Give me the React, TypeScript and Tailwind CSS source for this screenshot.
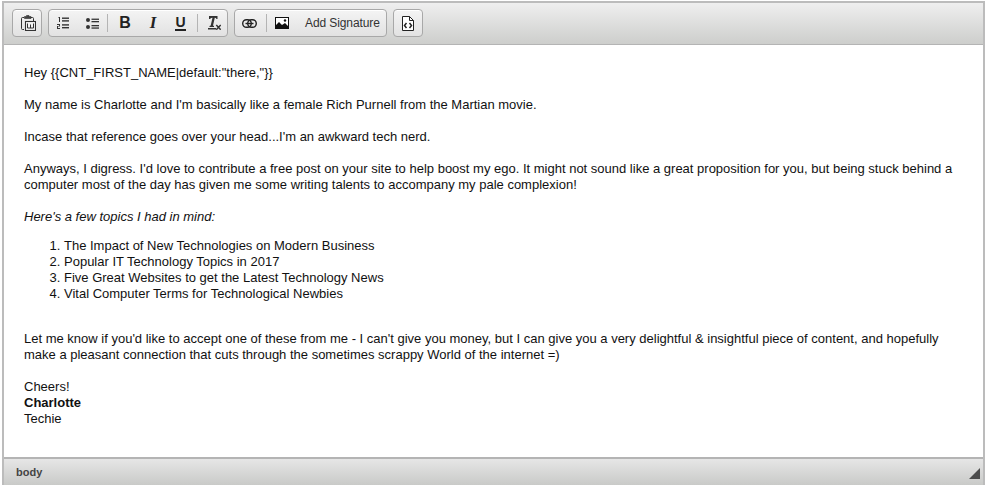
const Sep = () => <span className="w-px h-[18px] bg-[#b4b4b4]" />;

const Group = ({ children, className }: { children: React.ReactNode; className: string }) => (
  <div className={"h-[28px] flex items-center rounded-[4px] border border-[#a8a8a8] bg-gradient-to-b from-[#f4f4f4] to-[#e2e2e2] shadow-[inset_0_1px_0_#fff] " + className}>
    {children}
  </div>
);

const Slot = ({ children, className }: { children: React.ReactNode; className: string }) => (
  <span className={"flex items-center justify-center h-full text-[#222] " + className}>{children}</span>
);

function Toolbar() {
  return (
    <div className="h-[42px] flex items-start gap-[6px] pl-[8px] pt-[6px] border-b border-[#b4b4b4] bg-gradient-to-b from-[#efefef] to-[#cdcecc]">
      <Group className="w-[30px] justify-center pl-[2px]">
        <svg width="15" height="16" viewBox="0 0 15 16" fill="none" stroke="#333" strokeWidth="1">
          <path d="M3 2.5H1.5Q0.5 2.5 0.5 3.5V13.5Q0.5 14.5 1.5 14.5H3" />
          <path d="M10 2.5H11.5Q12.5 2.5 12.5 3.5V6" />
          <path d="M3.5 3.5V1.5H5.5V0.5H8V1.5H10V3.5Z" fill="#444" strokeWidth="0.6" />
          <rect x="4.5" y="6.5" width="10" height="9" strokeWidth="1.1" fill="#f4f4f4" />
          <path d="M6.5 8.5V13H12.5V8.5M9.5 9.5V13" strokeWidth="1" />
        </svg>
      </Group>
      <Group className="w-[180px]">
        <Slot className="w-[28px]">
          <svg width="12" height="12" viewBox="0 0 12 12" fill="#333">
            <path d="M1.5 0H3V5H2V1H1.5ZM0 7H3V9.5H1V11H3V12H0V9H2V8H0Z" />
            <rect x="5" y="0.5" width="7" height="1.4" /><rect x="5" y="3.2" width="7" height="1.4" />
            <rect x="5" y="7.2" width="7" height="1.4" /><rect x="5" y="10" width="7" height="1.4" />
          </svg>
        </Slot>
        <Slot className="w-[30px]">
          <svg width="13" height="11" viewBox="0 0 13 11" fill="#333">
            <circle cx="2" cy="2" r="2" /><circle cx="2" cy="9" r="2" />
            <rect x="5.5" y="0.6" width="7.5" height="1.3" /><rect x="5.5" y="3" width="7.5" height="1.3" />
            <rect x="5.5" y="7" width="7.5" height="1.3" /><rect x="5.5" y="9.4" width="7.5" height="1.3" />
          </svg>
        </Slot>
        <Sep />
        <Slot className="w-[34px] text-[16px] font-bold font-['Liberation_Sans',sans-serif]">B</Slot>
        <Slot className="w-[22px] text-[17px] font-bold italic font-['Liberation_Serif',serif]">I</Slot>
        <Slot className="w-[33px]">
          <span className="text-[14px] font-bold leading-[13px] font-['Liberation_Sans',sans-serif] border-b-2 border-[#222] px-[0.5px]">U</span>
        </Slot>
        <Sep />
        <Slot className="w-[29px] pl-[3px]">
          <svg width="14" height="14" viewBox="0 0 14 14" fill="#333">
            <path d="M2 0H10.5V3H9.5Q9 1.7 7.8 1.7L6 9.5L7 10V11H2.5V10L3.7 9.5L5.5 1.7Q3.8 1.7 3 3H2Z" />
            <rect x="1" y="12" width="8" height="1.5" />
            <path d="M9.3 9L13.7 13.7M13.7 9L9.3 13.7" stroke="#333" strokeWidth="1.5" fill="none" />
          </svg>
        </Slot>
      </Group>
      <Group className="w-[153px]">
        <Slot className="w-[31px] pr-[3px]">
          <svg width="15" height="9" viewBox="0 0 15 9" fill="none" stroke="#222" strokeWidth="1.4">
            <rect x="0.7" y="0.7" width="8.6" height="7.6" rx="3.8" />
            <rect x="5.7" y="0.7" width="8.6" height="7.6" rx="3.8" />
            <path d="M3.5 4.5H11.5" />
          </svg>
        </Slot>
        <Sep />
        <Slot className="w-[30px]">
          <svg width="14" height="12" viewBox="0 0 14 12">
            <rect x="0.5" y="0.5" width="13" height="11" fill="#fff" stroke="#111" />
            <path d="M1 11V8L4 5L7 8L10 6L13 9V11Z" fill="#111" />
            <circle cx="10" cy="3.5" r="1.2" fill="#111" />
          </svg>
        </Slot>
        <span className="ml-[8px] text-[12px] leading-[14px] text-[#333] tracking-[-0.1px] font-['Liberation_Sans',sans-serif]">Add Signature</span>
      </Group>
      <Group className="w-[30px] justify-center">
        <svg width="12" height="15" viewBox="0 0 12 15" fill="none" stroke="#222" strokeWidth="1">
          <path d="M0.5 0.5H7.5L11.5 4.5V14.5H0.5Z" fill="#fff" />
          <path d="M7.5 0.5V4.5H11.5" />
          <path d="M4.5 7L2.5 9.5L4.5 12M7.5 7L9.5 9.5L7.5 12" strokeWidth="1.5" />
        </svg>
      </Group>
    </div>
  );
}

function Body() {
  return (
    <div className="flex-1 bg-white pl-[20px] pr-[24px] pt-[20px] text-[13px] leading-[16px] text-[#111] font-['Liberation_Sans',Arial,sans-serif]">
      <p className="mb-[16px]">{'Hey {{CNT_FIRST_NAME|default:"there,"}}'}</p>
      <p className="mb-[16px]">My name is Charlotte and I'm basically like a female Rich Purnell from the Martian movie.</p>
      <p className="mb-[16px]">Incase that reference goes over your head...I'm an awkward tech nerd.</p>
      <p className="mb-[16px]">Anyways, I digress. I'd love to contribute a free post on your site to help boost my ego. It might not sound like a great proposition for you, but being stuck behind a computer most of the day has given me some writing talents to accompany my pale complexion!</p>
      <p className="mb-[13px] italic">Here's a few topics I had in mind:</p>
      <ol className="list-decimal pl-[40px]">
        <li>The Impact of New Technologies on Modern Business</li>
        <li>Popular IT Technology Topics in 2017</li>
        <li>Five Great Websites to get the Latest Technology News</li>
        <li>Vital Computer Terms for Technological Newbies</li>
      </ol>
      <p className="mt-[29px] mb-[16px]">Let me know if you'd like to accept one of these from me - I can't give you money, but I can give you a very delightful &amp; insightful piece of content, and hopefully make a pleasant connection that cuts through the sometimes scrappy World of the internet =)</p>
      <p>Cheers!</p>
      <p className="font-bold">Charlotte</p>
      <p>Techie</p>
    </div>
  );
}

export default function App() {
  return (
    <div className="w-[988px] h-[485px] bg-white pl-[2px] pr-[3px] pt-[1px] overflow-hidden">
      <div className="h-full flex flex-col border-t-2 border-x-2 border-[#bcbcbc]">
        <Toolbar />
        <Body />
        <div className="h-[28px] flex items-center justify-between pl-[12px] pr-[3px] border-t-2 border-[#b4b4b4] bg-gradient-to-b from-[#e6e6e6] to-[#c9cac8]">
          <span className="text-[11px] font-bold text-[#444] font-['Liberation_Sans',sans-serif]">body</span>
          <svg width="11" height="11" viewBox="0 0 11 11" className="mt-[2px]"><path d="M11 0V11H0Z" fill="#4c4c4c" /></svg>
        </div>
      </div>
    </div>
  );
}
